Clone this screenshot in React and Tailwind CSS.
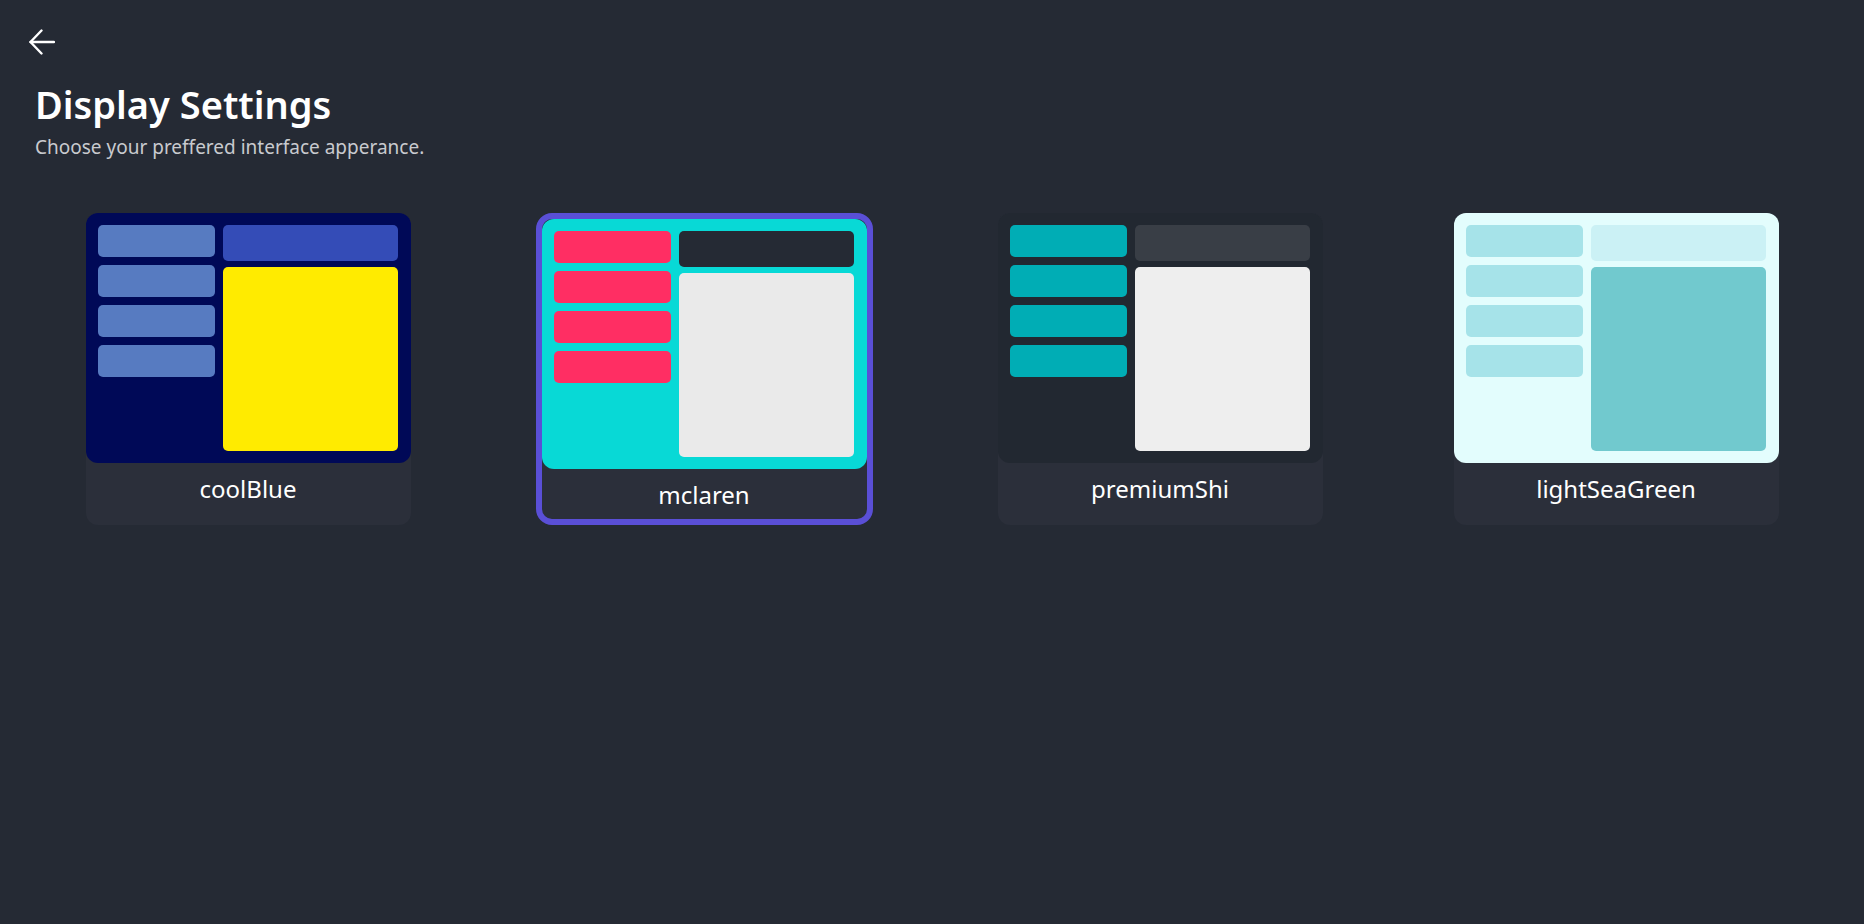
import { useState } from "react";

const themes = [
  {
    name: "coolBlue",
    bg: "bg-[#000957]",
    side: "bg-[#577bc1]",
    top: "bg-[#344cb7]",
    main: "bg-[#ffeb00]",
  },
  {
    name: "mclaren",
    bg: "bg-[#08d9d6]",
    side: "bg-[#ff2e63]",
    top: "bg-[#252a34]",
    main: "bg-[#eaeaea]",
  },
  {
    name: "premiumShi",
    bg: "bg-[#222831]",
    side: "bg-[#00adb5]",
    top: "bg-[#393e46]",
    main: "bg-[#eeeeee]",
  },
  {
    name: "lightSeaGreen",
    bg: "bg-[#e3fdfd]",
    side: "bg-[#a6e3e9]",
    top: "bg-[#cbf1f5]",
    main: "bg-[#71c9ce]",
  },
];

function ThemeCard({ theme, selected, onSelect }) {
    return (
        <button
            onClick={onSelect}
            className={
                selected
                    ? "flex flex-col h-[312px] rounded-2xl bg-[#2b2f3a] border-[6px] border-[#5a4fd6] text-left"
                    : "flex flex-col h-[312px] rounded-xl bg-[#2b2f3a] text-left"
            }
        >
            {/* 미리보기 */}
            <div className={`w-[325px] h-[250px] shrink-0 p-3 rounded-xl grid grid-cols-[2fr_3fr] gap-2 ${theme.bg}`}>
                <div className="flex flex-col gap-2">
                    <div className={`h-8 rounded-[5px] ${theme.side}`}></div>
                    <div className={`h-8 rounded-[5px] ${theme.side}`}></div>
                    <div className={`h-8 rounded-[5px] ${theme.side}`}></div>
                    <div className={`h-8 rounded-[5px] ${theme.side}`}></div>
                </div>
                <div className="flex flex-col gap-[6px]">
                    <div className={`h-9 rounded-[5px] ${theme.top}`}></div>
                    <div className={`flex-1 rounded-[5px] ${theme.main}`}></div>
                </div>
            </div>
            <div className="pt-3 text-center text-[24px] leading-7 text-white">{theme.name}</div>
        </button>
    );
}

export default function App() {
    const [selected, setSelected] = useState("mclaren");

    return (
        <div className="min-h-screen bg-[#252a34] font-['Noto_Sans',sans-serif]">
            <div className="pl-[29px] pt-[29px]">
                <button className="block text-white">
                    <svg width="26" height="26" viewBox="0 0 26 26" fill="none" stroke="currentColor" strokeWidth="2.4" strokeLinecap="round" strokeLinejoin="round">
                        <path d="M25 13H1.5" />
                        <path d="M12.5 1.5L1.5 13l11 11.5" />
                    </svg>
                </button>
            </div>

            <div className="pl-[35px] mt-[25px]">
                <h1 className="text-[38px] leading-[48px] font-semibold text-white">Display Settings</h1>
                <p className="mt-[7px] text-[19px] leading-6 text-[#c9cacf]">Choose your preffered interface apperance.</p>
            </div>

            <div className="mt-[54px] px-5 grid grid-cols-4 justify-items-center items-start">
                {themes.map((t) => (
                    <ThemeCard
                        key={t.name}
                        theme={t}
                        selected={selected === t.name}
                        onSelect={() => setSelected(t.name)}
                    />
                ))}
            </div>
        </div>
    );
}
